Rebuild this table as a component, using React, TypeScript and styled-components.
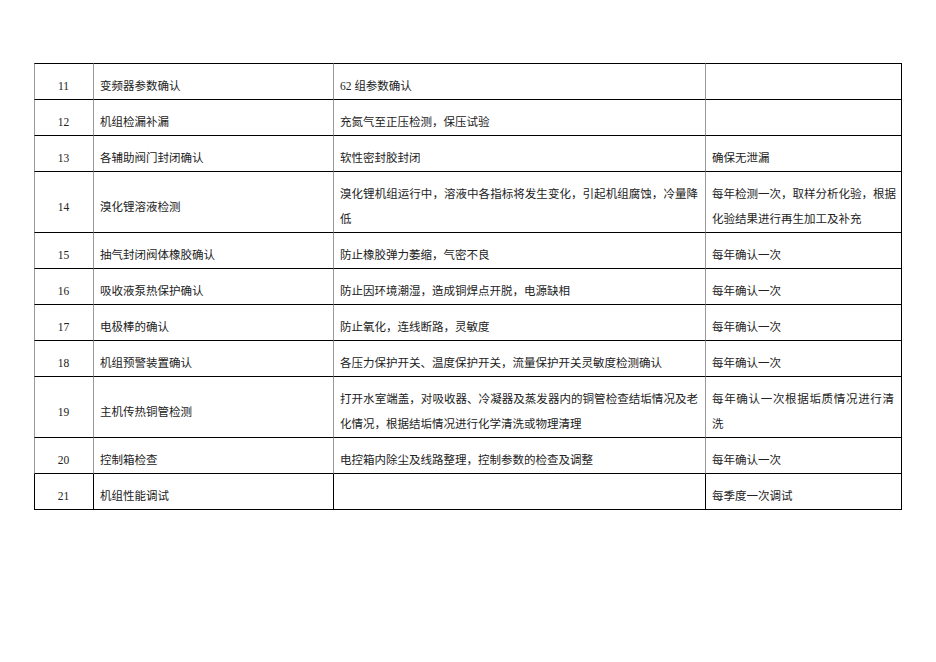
import React from "react";
import styled, { createGlobalStyle } from "styled-components";

const GlobalStyle = createGlobalStyle`
  html, body {
    margin: 0;
    padding: 0;
    background: #ffffff;
  }
`;

const Page = styled.div`
  width: 936px;
  min-height: 662px;
  box-sizing: border-box;
  padding: 63px 0 0 34px;
  background: #ffffff;
  font-family: "Liberation Serif", "Noto Sans CJK SC", serif;
  font-size: 11.5px;
  line-height: 25px;
  color: #222;
`;

const Table = styled.table`
  width: 868px;
  table-layout: fixed;
  border-collapse: separate;
  border-spacing: 0;
`;

const Row = styled.tr``;

const Cell = styled.td<{ $dark?: boolean; $first?: boolean; $last?: boolean; $center?: boolean }>`
  box-sizing: border-box;
  padding: 10px 7px 0 6px;
  vertical-align: middle;
  border-bottom: 1px solid #000;
  border-top: ${(p) => (p.$first ? "1px solid #000" : "none")};
  border-left: 1px solid ${(p) => (p.$dark ? "#000" : "#9a9a9a")};
  border-right: ${(p) => (p.$last ? "1px solid #000" : "none")};
  text-align: ${(p) => (p.$center ? "center" : "left")};
  white-space: nowrap;
`;

const Line = styled.div<{ $justify?: boolean }>`
  white-space: nowrap;
  text-align: ${(p) => (p.$justify ? "justify" : "left")};
  text-align-last: ${(p) => (p.$justify ? "justify" : "left")};
`;

type Item = { no: string; name: string; method: string[]; note: string[] };

const items: Item[] = [
  { no: "11", name: "变频器参数确认", method: ["62 组参数确认"], note: [] },
  { no: "12", name: "机组检漏补漏", method: ["充氮气至正压检测，保压试验"], note: [] },
  { no: "13", name: "各辅助阀门封闭确认", method: ["软性密封胶封闭"], note: ["确保无泄漏"] },
  {
    no: "14",
    name: "溴化锂溶液检测",
    method: ["溴化锂机组运行中，溶液中各指标将发生变化，引起机组腐蚀，冷量降", "低"],
    note: ["每年检测一次，取样分析化验，根据", "化验结果进行再生加工及补充"],
  },
  { no: "15", name: "抽气封闭阀体橡胶确认", method: ["防止橡胶弹力萎缩，气密不良"], note: ["每年确认一次"] },
  { no: "16", name: "吸收液泵热保护确认", method: ["防止因环境潮湿，造成铜焊点开脱，电源缺相"], note: ["每年确认一次"] },
  { no: "17", name: "电极棒的确认", method: ["防止氧化，连线断路，灵敏度"], note: ["每年确认一次"] },
  { no: "18", name: "机组预警装置确认", method: ["各压力保护开关、温度保护开关，流量保护开关灵敏度检测确认"], note: ["每年确认一次"] },
  {
    no: "19",
    name: "主机传热铜管检测",
    method: ["打开水室端盖，对吸收器、冷凝器及蒸发器内的铜管检查结垢情况及老", "化情况，根据结垢情况进行化学清洗或物理清理"],
    note: ["每年确认一次根据垢质情况进行清", "洗"],
  },
  { no: "20", name: "控制箱检查", method: ["电控箱内除尘及线路整理，控制参数的检查及调整"], note: ["每年确认一次"] },
  { no: "21", name: "机组性能调试", method: [], note: ["每季度一次调试"] },
];

const Lines: React.FC<{ lines: string[] }> = ({ lines }) => (
  <>
    {lines.length === 0 ? <Line>&nbsp;</Line> : null}
    {lines.map((l, i) => (
      <Line key={i} $justify={i < lines.length - 1}>
        {l}
      </Line>
    ))}
  </>
);

export default function App() {
  return (
    <Page>
      <GlobalStyle />
      <Table>
        <colgroup>
          <col style={{ width: 59 }} />
          <col style={{ width: 240 }} />
          <col style={{ width: 372 }} />
          <col style={{ width: 197 }} />
        </colgroup>
        <tbody>
          {items.map((it, idx) => {
            const first = idx === 0;
            const dark = idx === items.length - 1;
            return (
              <Row key={it.no}>
                <Cell $first={first} $dark={dark} $center>
                  {it.no}
                </Cell>
                <Cell $first={first} $dark={dark}>
                  {it.name}
                </Cell>
                <Cell $first={first} $dark={dark}>
                  <Lines lines={it.method} />
                </Cell>
                <Cell $first={first} $dark={dark} $last>
                  <Lines lines={it.note} />
                </Cell>
              </Row>
            );
          })}
        </tbody>
      </Table>
    </Page>
  );
}
